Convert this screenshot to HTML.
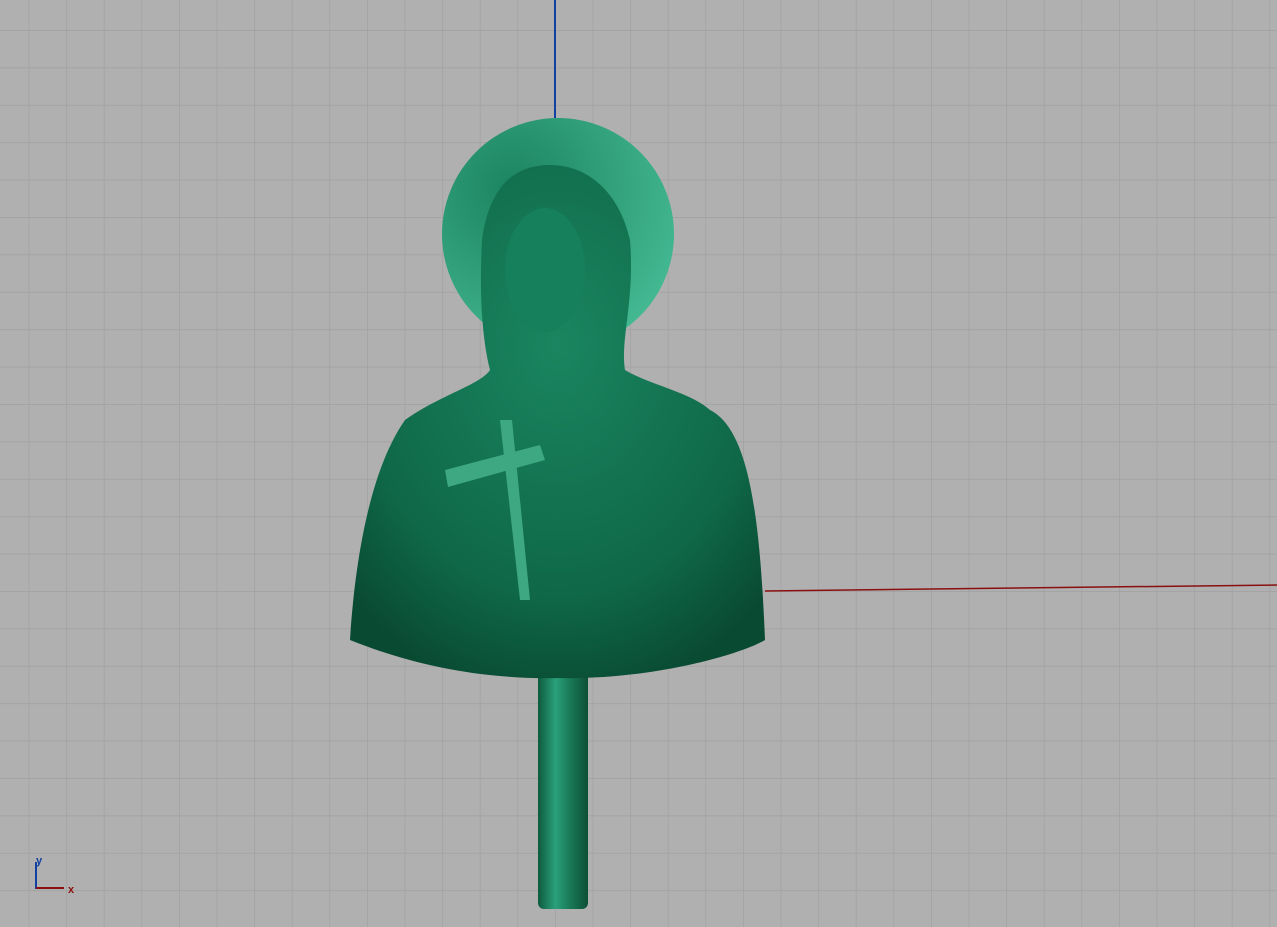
<!DOCTYPE html><html><head><style>html,body{margin:0;padding:0;background:#b0b0b0;overflow:hidden}</style></head><body>
<svg width="1277" height="927" xmlns="http://www.w3.org/2000/svg" style="display:block">
<defs>
<pattern id="g" x="555" y="591" width="37.6" height="37.4" patternUnits="userSpaceOnUse">
<path d="M0 0V37.4M0 0H37.6" stroke="#a0a0a0" stroke-width="1.4" fill="none"/></pattern>
<linearGradient id="pole" x1="0" x2="1"><stop offset="0" stop-color="#0e5a3e"/><stop offset=".35" stop-color="#2aa07a"/><stop offset=".6" stop-color="#1b7f5c"/><stop offset="1" stop-color="#0c4f36"/></linearGradient>
<radialGradient id="halo" cx=".3" cy=".3" r=".9"><stop offset="0" stop-color="#1c8460"/><stop offset="1" stop-color="#49c099"/></radialGradient>
<radialGradient id="body" cx=".5" cy=".35" r=".7"><stop offset="0" stop-color="#1a8560"/><stop offset=".7" stop-color="#0f6848"/><stop offset="1" stop-color="#094a33"/></radialGradient>
</defs>
<rect width="1277" height="927" fill="#b0b0b0"/>
<rect width="1277" height="927" fill="url(#g)"/>
<path d="M555 0V118" stroke="#1040a0" stroke-width="2"/>
<path d="M765 591L1277 585" stroke="#8a1010" stroke-width="1.5"/>
<circle cx="558" cy="234" r="116" fill="url(#halo)"/>
<rect x="538" y="672" width="50" height="237" rx="6" fill="url(#pole)"/>
<path d="M350 640C355 560 370 470 405 420C440 395 480 385 490 370C480 330 480 280 482 240C490 180 520 165 550 165C590 165 620 195 630 240C635 300 620 340 625 370C650 385 690 392 710 410C750 430 760 520 765 640C740 655 650 680 560 678C470 680 400 660 350 640Z" fill="url(#body)"/>
<ellipse cx="545" cy="270" rx="40" ry="62" fill="#16805c"/>
<path d="M500 420L520 600L530 600L512 420Z" fill="#3da882"/>
<path d="M445 470L540 445L545 460L448 487Z" fill="#3da882"/>
<path d="M36 862V888H64" stroke="#1040a0" stroke-width="2" fill="none"/>
<path d="M36 888H64" stroke="#8a1010" stroke-width="2"/>
<text x="36" y="864" font-family="Liberation Sans,sans-serif" font-size="11" fill="#1040a0" font-weight="bold">y</text>
<text x="68" y="893" font-family="Liberation Sans,sans-serif" font-size="11" fill="#8a1010" font-weight="bold">x</text>
</svg></body></html>
